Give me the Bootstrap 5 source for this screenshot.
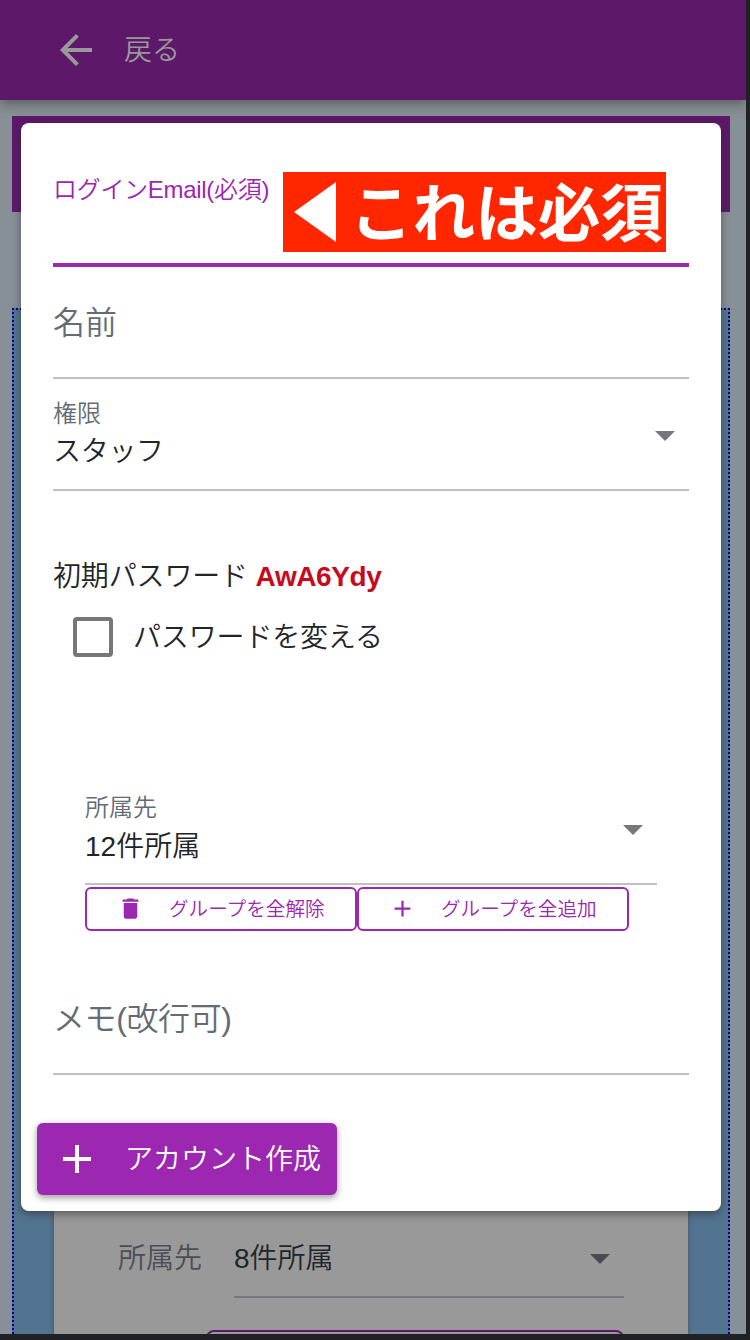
<!DOCTYPE html>
<html lang="ja">
<head>
<meta charset="utf-8">
<meta name="viewport" content="width=device-width, initial-scale=1">
<title>アカウント作成</title>
<link href="https://cdn.jsdelivr.net/npm/bootstrap@5.3.0/dist/css/bootstrap.min.css" rel="stylesheet">
<style>
:root{--main:#9c27b0;--main-dim:#5d1869}
body{background:#202124;color:#212529;font-family:"Liberation Sans","Noto Sans CJK JP",sans-serif;font-weight:350;height:1340px;overflow:hidden;white-space:nowrap}
svg{display:block;flex:none}
.screen{width:746px;height:1334px;background:#889097}
.topbar{height:100px;background:var(--main-dim);color:#999;padding:0 0 0 52px;gap:24px;font-size:28px;box-shadow:0 4px 8px -2px rgba(75,75,65,.55),0 8px 10px rgba(80,85,80,.3)}
.topbar span{padding-top:2px}
.banner{height:96px;margin:16px 16px 0 12px;background:var(--main-dim)}
.area{margin:96px 16px 0 12px;height:1026px;border:2px dotted #0000a0;border-bottom:0;background:#537490;padding:0 40px}
.sheet{background:#999;height:1024px;box-shadow:0 0 5px rgba(60,60,60,.6);clip-path:inset(0 -6px 0 -6px);padding:904px 64px 0}
.sheet-line{height:84px;font-size:28px}
.sheet-line .name{width:116px;color:#4a4f55;line-height:90px}
.sheet-line .pick{border-bottom:2px solid #75777a;line-height:80px;height:84px;padding:8px 14px 0 0}
.sheet-btn{height:40px;margin:32px 0 0 88px;border:2px solid var(--main-dim);border-radius:8px}
.dialog-box{left:21px;top:123px;width:700px;height:1088px;background:#fff;border-radius:8px;padding:32px 32px 0;box-shadow:0 3px 8px rgba(40,40,40,.55)}
.field{border-bottom:2px solid #c0c0c0;color:#646c73}
.f-mail{height:112px;border-bottom:4px solid var(--main);color:var(--main);font-size:24px;line-height:70px;letter-spacing:-.3px}
.f-name{height:112px;font-size:32px;line-height:112px}
.f-role{height:112px}
.cap{font-size:24px;line-height:36px;height:36px}
.val{font-size:28px;line-height:40px;height:38px;color:#212529}
.f-role .cap{margin-top:17px}
.f-role .val{letter-spacing:-.3px}
.caret{border:10px solid transparent;border-top-color:#75777a;border-bottom:0}
.f-role .caret{margin:52px 14px 0 0;align-self:flex-start}
.pass{margin-top:65px;height:42px;line-height:42px;font-size:28px;letter-spacing:-.15px}
.pass b{color:#c70a1c;font-size:28px;font-weight:700;letter-spacing:-.4px}
.check-line{height:60px;margin-top:9px;padding-left:20px;gap:20px;font-size:28px;letter-spacing:-.15px}
.check-line span+span{padding-top:2px}
.tick{width:40px;height:40px;border:4px solid #75777a;border-radius:4px}
.group{margin:122px 32px 0}
.f-group{height:96px}
.f-group .cap{margin-top:1px}
.f-group .val{line-height:41px}
.f-group .caret{margin:36px 14px 0 0;align-self:flex-start}
.obtn{width:272px;height:44px;border:2px solid var(--main);border-radius:6px;color:var(--main);font-size:19.6px;line-height:38px;margin-top:2px;padding-left:30px}
.obtn svg{margin:-2px 25px 0 0}
.f-memo{margin-top:40px;height:104px;font-size:32px;line-height:96px;letter-spacing:-.4px}
.make{width:300px;height:72px;margin:48px 0 0 -16px;background:var(--main);color:#fff;border-radius:6px;font-size:28px;padding-left:20px;gap:28px;box-shadow:0 3px 6px rgba(0,0,0,.32),0 1px 10px rgba(0,0,0,.1)}
.make span{padding-top:2px}
.callout-tag{left:262px;top:49px;width:383px;height:80px;background:#ff2600;color:#fff;font:700 62.600px/74px "Noto Sans CJK JP",sans-serif;padding-left:11px}
.callout-tag svg{margin-right:14px}
.callout-tag span{height:80px}
</style>
</head>
<body>
<div class="screen position-relative overflow-hidden">
  <header class="topbar d-flex align-items-center">
    <svg width="48" height="48" viewBox="0 0 24 24" fill="#999"><path d="M20 11H7.830l5.590-5.590L12 4l-8 8 8 8 1.410-1.410L7.830 13H20v-2z"/></svg>
    <span>戻る</span>
  </header>
  <div class="banner"></div>
  <main class="area">
    <div class="sheet">
      <div class="d-flex sheet-line">
        <div class="name">所属先</div>
        <div class="pick flex-grow-1 d-flex justify-content-between align-items-center"><span>8件所属</span><i class="caret" style="border-top-color:#494b50"></i></div>
      </div>
      <div class="sheet-btn"></div>
    </div>
  </main>

  <form class="dialog-box position-absolute">
    <div class="field f-mail">ログインEmail(必須)</div>
    <div class="field f-name">名前</div>
    <div class="field f-role d-flex justify-content-between">
      <div><div class="cap">権限</div><div class="val">スタッフ</div></div>
      <i class="caret"></i>
    </div>
    <div class="pass">初期パスワード <b>AwA6Ydy</b></div>
    <label class="check-line d-flex align-items-center"><span class="tick"></span><span>パスワードを変える</span></label>
    <div class="group">
      <div class="field f-group d-flex justify-content-between">
        <div><div class="cap">所属先</div><div class="val">12件所属</div></div>
        <i class="caret"></i>
      </div>
      <div class="d-flex">
        <div class="obtn d-flex align-items-center"><svg width="27" height="27" viewBox="0 0 24 24" fill="#9c27b0"><path d="M6 19c0 1.100.9 2 2 2h8c1.100 0 2-.9 2-2V7H6v12zM19 4h-3.500l-1-1h-5l-1 1H5v2h14V4z"/></svg><span>グループを全解除</span></div>
        <div class="obtn d-flex align-items-center"><svg width="27" height="27" viewBox="0 0 24 24" fill="#9c27b0"><path d="M19 13h-6v6h-2v-6H5v-2h6V5h2v6h6v2z"/></svg><span>グループを全追加</span></div>
      </div>
    </div>
    <div class="field f-memo">メモ(改行可)</div>
    <div class="make d-flex align-items-center"><svg width="40" height="40" viewBox="0 0 40 40" stroke="#fff" stroke-width="4"><path d="M6 20h28M20 6v28"/></svg><span>アカウント作成</span></div>
    <div class="callout-tag position-absolute d-flex align-items-center"><svg width="42" height="60" viewBox="0 0 42 60" fill="#fff"><path d="M0 30L42 0v60z"/></svg><span>これは必須</span></div>
  </form>
</div>
<script src="https://cdn.jsdelivr.net/npm/bootstrap@5.3.0/dist/js/bootstrap.bundle.min.js"></script>
</body>
</html>
